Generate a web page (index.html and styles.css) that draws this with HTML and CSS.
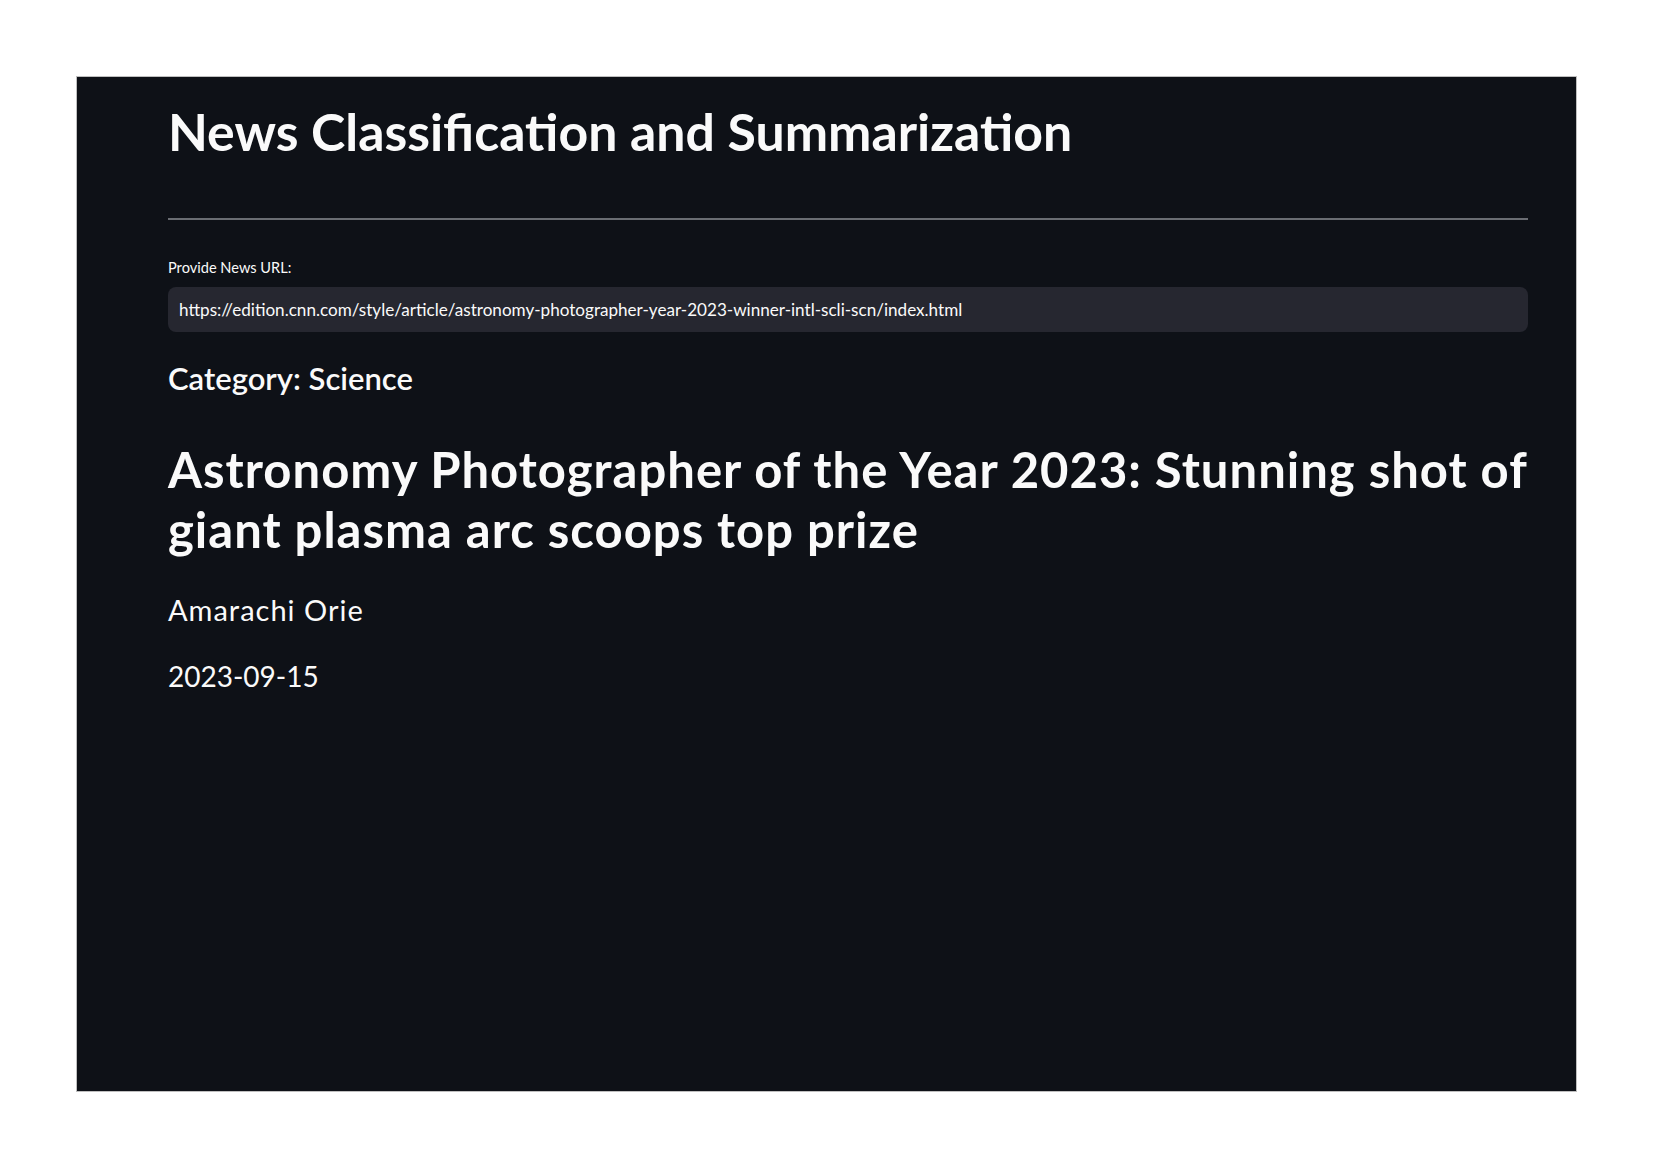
FILE: index.html
```html
<!DOCTYPE html>
<html lang="en">
<head>
<meta charset="utf-8">
<title>News Classification and Summarization</title>
<link rel="stylesheet" href="styles.css">
</head>
<body>
  <main class="app">
    <h1 class="title">News Classification and Summarization</h1>
    <hr class="divider">
    <label class="field-label" for="url">Provide News URL:</label>
    <div class="input-box">
      <input id="url" class="url-input" type="text" value="https://edition.cnn.com/style/article/astronomy-photographer-year-2023-winner-intl-scli-scn/index.html">
    </div>
    <h3 class="category">Category: Science</h3>
    <h2 class="headline">Astronomy Photographer of the Year 2023: Stunning shot of giant plasma arc scoops top prize</h2>
    <p class="meta author">Amarachi Orie</p>
    <p class="meta date">2023-09-15</p>
  </main>
</body>
</html>
```

FILE: styles.css
```css
html, body {
  margin: 0;
  padding: 0;
  background: #ffffff;
}

body {
  padding: 77px 77px 76px 77px;
  font-family: Lato, "Noto Sans", sans-serif;
  color: #fafafa;
}

.app {
  box-sizing: border-box;
  height: 1014px;
  background: #0e1117;
  box-shadow: 0 0 0 1px rgba(0, 0, 0, 0.25);
  padding: 24px 48px 0 91px;
  display: flex;
  flex-direction: column;
}

.title {
  margin: 0;
  font-size: 51.8px;
  line-height: 60px;
  font-weight: 700;
  color: #fafafa;
}

.divider {
  margin: 57px 0 0 0;
  border: 0;
  height: 2px;
  background: #6a6d73;
}

.field-label {
  margin-top: 38px;
  font-size: 14.6px;
  line-height: 20px;
  color: #fafafa;
}

.input-box {
  margin-top: 9px;
  height: 45px;
  background: #262730;
  border-radius: 8px;
  display: flex;
  align-items: center;
}

.url-input {
  width: 100%;
  box-sizing: border-box;
  border: 0;
  outline: none;
  background: transparent;
  color: #fafafa;
  font-family: Lato, "Noto Sans", sans-serif;
  font-size: 17.1px;
  line-height: 45px;
  height: 45px;
  padding: 0 11px;
}

.category {
  margin: 26px 0 0 0;
  font-size: 31px;
  line-height: 40px;
  font-weight: 600;
}

.headline {
  margin: 41px 0 0 0;
  font-size: 49px;
  line-height: 60px;
  letter-spacing: 1px;
  font-weight: 700;
}

.meta {
  margin: 0;
  line-height: 36px;
  font-weight: 400;
}

.author {
  margin-top: 33px;
  font-size: 29px;
  letter-spacing: 1px;
}

.date {
  margin-top: 30px;
  font-size: 28px;
}
```
